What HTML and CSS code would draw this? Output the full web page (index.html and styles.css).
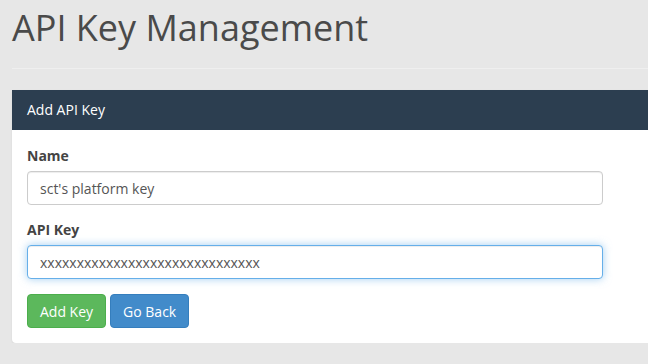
FILE: index.html
```html
<!DOCTYPE html>
<html lang="en">
<head>
  <meta charset="UTF-8" />
  <title>API Key Management</title>
  <link rel="stylesheet" href="styles.css">
</head>
<body>
  <div class="page">
    <h1 class="page-header">API Key Management</h1>

    <section class="panel">
      <div class="panel-heading">Add API Key</div>
      <div class="panel-body">
        <form class="key-form">
          <div class="form-group">
            <label for="keyName">Name</label>
            <input type="text" id="keyName" class="form-control" value="sct's platform key" />
          </div>
          <div class="form-group">
            <label for="keyValue">API Key</label>
            <input type="text" id="keyValue" class="form-control focused" value="xxxxxxxxxxxxxxxxxxxxxxxxxxxxxx" />
          </div>
          <div class="actions">
            <button type="button" class="btn btn-success">Add Key</button>
            <button type="button" class="btn btn-primary">Go Back</button>
          </div>
        </form>
      </div>
    </section>
  </div>
</body>
</html>
```

FILE: styles.css
```css
html, body {
  margin: 0;
  overflow: hidden;
}
body {
  font-family: 'Open Sans', sans-serif;
  font-size: 14px;
  line-height: 20px;
  background-color: #e7e7e7;
  color: #444;
}
.page {
  padding-left: 12px;
  width: 720px;
}
.page-header {
  margin: 8px 0 21px;
  padding-bottom: 20px;
  font-size: 36px;
  line-height: 40px;
  font-weight: 400;
  color: #4a4a4a;
  border-bottom: 1px solid #efefef;
}
.panel {
  background: #fff;
  border-radius: 0 0 4px 4px;
  box-shadow: 0 1px 2px rgba(0,0,0,0.08);
}
.panel-heading {
  background-color: #2c3e50;
  color: #fff;
  padding: 10px 15px;
}
.panel-body {
  padding: 16px 15px 15px;
}
.key-form {
  width: 576px;
}
.form-group {
  margin-bottom: 15px;
}
.form-group label {
  display: block;
  margin-bottom: 5px;
  font-weight: 700;
  color: #444;
}
.form-control {
  display: block;
  box-sizing: border-box;
  width: 100%;
  height: 34px;
  padding: 6px 12px;
  font-family: 'Open Sans', sans-serif;
  font-size: 14px;
  color: #555;
  background: #fff;
  border: 1px solid #ccc;
  border-radius: 4px;
  box-shadow: inset 0 1px 1px rgba(0,0,0,0.075);
  outline: none;
}
.form-control.focused {
  border-color: #66afe9;
  box-shadow: inset 0 1px 1px rgba(0,0,0,0.075), 0 0 8px rgba(102,175,233,0.6);
}
.actions {
  display: flex;
  gap: 4px;
}
.btn {
  height: 34px;
  padding: 6px 12px;
  font-family: 'Open Sans', sans-serif;
  font-size: 14px;
  color: #fff;
  border: 1px solid transparent;
  border-radius: 4px;
  cursor: pointer;
}
.btn-success {
  background-color: #5cb85c;
  border-color: #4cae4c;
}
.btn-primary {
  background-color: #428bca;
  border-color: #357ebd;
}
```
